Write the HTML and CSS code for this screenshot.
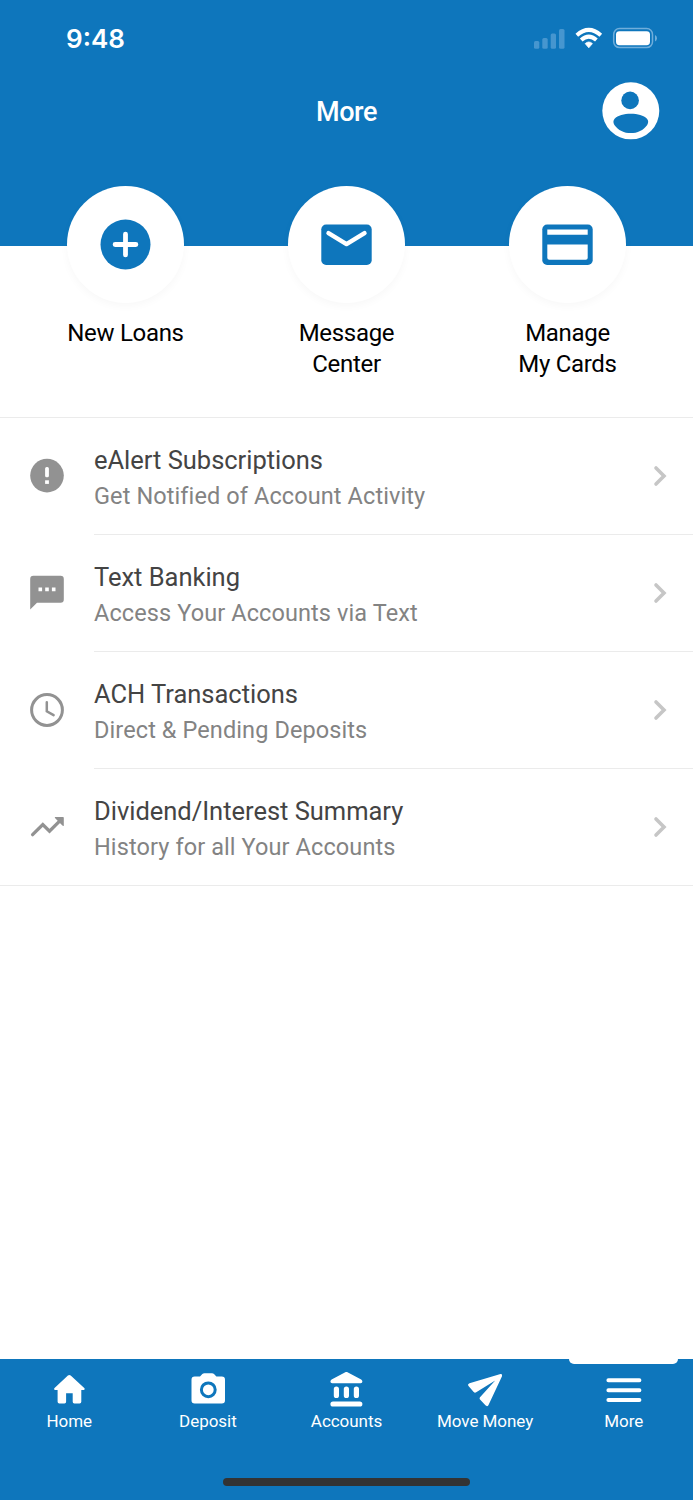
FILE: index.html
```
<!DOCTYPE html>
<html lang="en">
<head>
    <meta charset="UTF-8">
    <meta name="viewport" content="width=device-width, initial-scale=1.0">
    <title>More</title>
    <link rel="stylesheet" href="styles.css">
</head>
<body>
    <header class="header">
        <div class="status-bar">
            <span class="time">9:48</span>
            <svg class="status-icons" width="124" height="22" viewBox="0 0 124 22">
                <g fill="#4696cf">
                    <rect x="1" y="14" width="5.3" height="7.7" rx="1.5"/>
                    <rect x="9.3" y="11" width="5.4" height="10.7" rx="1.5"/>
                    <rect x="17.7" y="6.5" width="5.3" height="15.2" rx="1.5"/>
                    <rect x="26" y="2" width="5.5" height="19.7" rx="1.5"/>
                </g>
                <g fill="none" stroke="#fff" stroke-width="4">
                    <path d="M43.8 8.2Q55.8 -2.4 67.8 8.2"/>
                    <path d="M48.2 13Q55.8 6.2 63.4 13"/>
                </g>
                <path d="M52.2 16.6Q55.8 13.4 59.4 16.6L55.8 20.8Z" fill="#fff" stroke="#fff" stroke-width="0.8" stroke-linejoin="round"/>
                <rect x="80.7" y="1.6" width="38.8" height="19" rx="5.8" fill="none" stroke="#70aedb" stroke-width="1.5"/>
                <rect x="83" y="4.2" width="34" height="14" rx="3.4" fill="#fff"/>
                <path d="M122 8Q124 8.9 124 11.2Q124 13.5 122 14.5Z" fill="#70aedb"/>
            </svg>
        </div>
        <div class="title-bar">
            <h1 class="title">More</h1>
            <svg class="avatar" width="58" height="58" viewBox="0 0 58 58">
                <circle cx="28.8" cy="28.8" r="28.5" fill="#fff"/>
                <circle cx="28.1" cy="18.4" r="8.8" fill="#0e76bc"/>
                <path d="M12.6 36.8C15.8 33.4 22 31.8 28.8 31.8C35.6 31.8 41.8 33.4 45 36.8C46.6 38.6 46.5 41 45.2 42.9C41.6 48.2 35.2 51.1 28.8 51.1C22.4 51.1 16 48.2 12.4 42.9C11.1 41 11 38.6 12.6 36.8Z" fill="#0e76bc"/>
            </svg>
        </div>
    </header>

    <section class="shortcuts">
        <a class="shortcut">
            <span class="circle">
                <svg width="53" height="53" viewBox="-0.5 -0.5 53 53">
                    <circle cx="26" cy="26" r="25" fill="#0e76bc"/>
                    <path d="M26 15.6V36.4M15.6 26H36.4" stroke="#fff" stroke-width="4.8" stroke-linecap="round"/>
                </svg>
            </span>
            <span class="shortcut-label">New Loans</span>
        </a>
        <a class="shortcut">
            <span class="circle">
                <svg width="53" height="53" viewBox="-0.5 -0.5 53 53">
                    <rect x="0.8" y="6" width="50.4" height="40.5" rx="4.8" fill="#0e76bc"/>
                    <path d="M8 14.6L26 25.6L44 14.6" fill="none" stroke="#fff" stroke-width="4.4" stroke-linecap="round" stroke-linejoin="round"/>
                </svg>
            </span>
            <span class="shortcut-label">Message Center</span>
        </a>
        <a class="shortcut">
            <span class="circle">
                <svg width="53" height="53" viewBox="-0.5 -0.5 53 53">
                    <rect x="0.8" y="6" width="50.4" height="40.5" rx="4.8" fill="#0e76bc"/>
                    <path d="M5.8 11H46.2V16.2H5.8Z" fill="#fff"/>
                    <path d="M5.8 26H46.2V39.2Q46.2 41.2 44.2 41.2H7.8Q5.8 41.2 5.8 39.2Z" fill="#fff"/>
                </svg>
            </span>
            <span class="shortcut-label">Manage<br>My Cards</span>
        </a>
    </section>

    <main class="list">
        <a class="row">
            <svg class="row-icon" width="36" height="36" viewBox="0 0 36 36">
                <circle cx="18" cy="17.6" r="16.8" fill="#929292"/>
                <rect x="16.1" y="9.1" width="3.8" height="10.2" rx="1.5" fill="#fff"/>
                <rect x="16.1" y="22.3" width="3.8" height="3.6" fill="#fff"/>
            </svg>
            <div class="row-body">
                <div class="row-text">
                    <div class="row-title">eAlert Subscriptions</div>
                    <div class="row-sub">Get Notified of Account Activity</div>
                </div>
                <svg class="chevron" width="14" height="22" viewBox="0 0 14 22"><path d="M3 3L11 11L3 19"/></svg>
            </div>
        </a>
        <a class="row">
            <svg class="row-icon" width="36" height="36" viewBox="0 0.4 36 36">
                <path d="M4.4 1.2H31.6Q34.8 1.2 34.8 4.4V25Q34.8 28.2 31.6 28.2H8L1.2 34.8V4.4Q1.2 1.2 4.4 1.2Z" fill="#929292"/>
                <path d="M9.5 13h3.6v3.6h-3.6zM16.2 13h3.6v3.6h-3.6zM22.9 13h3.6v3.6h-3.6z" fill="#fff"/>
            </svg>
            <div class="row-body">
                <div class="row-text">
                    <div class="row-title">Text Banking</div>
                    <div class="row-sub">Access Your Accounts via Text</div>
                </div>
                <svg class="chevron" width="14" height="22" viewBox="0 0 14 22"><path d="M3 3L11 11L3 19"/></svg>
            </div>
        </a>
        <a class="row">
            <svg class="row-icon" width="36" height="36" viewBox="0 0 36 36">
                <circle cx="18" cy="18" r="15.4" fill="none" stroke="#929292" stroke-width="3"/>
                <path d="M17.8 10.3V19.3L24.6 23.2" fill="none" stroke="#929292" stroke-width="2.5" stroke-linecap="round"/>
            </svg>
            <div class="row-body">
                <div class="row-text">
                    <div class="row-title">ACH Transactions</div>
                    <div class="row-sub">Direct &amp; Pending Deposits</div>
                </div>
                <svg class="chevron" width="14" height="22" viewBox="0 0 14 22"><path d="M3 3L11 11L3 19"/></svg>
            </div>
        </a>
        <a class="row">
            <svg class="row-icon" width="36" height="36" viewBox="0 -0.7 36 36">
                <path d="M3.6 26L13.8 15.8L20.5 22.5L30.6 12.4" fill="none" stroke="#929292" stroke-width="3.3" stroke-linecap="round"/>
                <path d="M26 8.2H34Q34.8 8.2 34.8 9V17Q34.2 17.6 33.4 16.8L26.2 9.6Q25.4 8.7 26 8.2Z" fill="#929292"/>
            </svg>
            <div class="row-body">
                <div class="row-text">
                    <div class="row-title">Dividend/Interest Summary</div>
                    <div class="row-sub">History for all Your Accounts</div>
                </div>
                <svg class="chevron" width="14" height="22" viewBox="0 0 14 22"><path d="M3 3L11 11L3 19"/></svg>
            </div>
        </a>
    </main>

    <nav class="tabs">
        <a class="tab">
            <svg width="36" height="36" viewBox="-0.3 0 36 36">
                <path d="M16.6 3.5Q18 2.5 19.4 3.5L33.2 16.3Q34 17.7 32.6 17.9H30V29.8Q30 31.5 28.3 31.5H23Q21.4 31.5 21.4 29.8V21.3H14.8V29.8Q14.8 31.5 13.2 31.5H8Q6.3 31.5 6.3 29.8V17.9H3.6Q2.2 17.7 3 16.3Z" fill="#fff"/>
            </svg>
            <span>Home</span>
        </a>
        <a class="tab">
            <svg width="36" height="36" viewBox="0 0 36 36">
                <path d="M4.7 4.5H10L12.3 2Q13.2 1.2 14.4 1.2H22Q23.2 1.2 24 2L26.4 4.5H31.8Q35 4.5 35 7.7V28.3Q35 31.5 31.8 31.5H4.7Q1.5 31.5 1.5 28.3V7.7Q1.5 4.5 4.7 4.5Z" fill="#fff"/>
                <circle cx="18.3" cy="17.8" r="6.9" fill="#fff" stroke="#0e76bc" stroke-width="3"/>
            </svg>
            <span>Deposit</span>
        </a>
        <a class="tab">
            <svg width="36" height="36" viewBox="-0.4 0 36 36">
                <path d="M16.9 0.2Q18 -0.4 19.1 0.2L32.8 7.4Q34 8.2 34 9.4Q34 11.2 32.2 11.2H3.8Q2 11.2 2 9.4Q2 8.2 3.2 7.4Z" fill="#fff"/>
                <path d="M8 17V23.5M18 17V23.5M28 17V23.5M4.6 32H31.4" stroke="#fff" stroke-width="5.2" stroke-linecap="round"/>
            </svg>
            <span>Accounts</span>
        </a>
        <a class="tab">
            <svg width="36" height="36" viewBox="0 0 36 36">
                <path d="M33.5 2Q35.7 1.8 35 4.3L21.4 33.2Q20.2 35 18.4 33.3L12.8 27.3Q12.2 26.3 13 25.3L28.2 8.4L9.2 20.3Q7.8 21.2 6.7 20L1.3 13.8Q0.3 12 2.5 11.2Z" fill="#fff"/>
            </svg>
            <span>Move Money</span>
        </a>
        <a class="tab active">
            <svg width="36" height="36" viewBox="0 0 36 36">
                <path d="M2.4 8.3H33.4M2.4 18.2H33.4M2.4 28H33.4" stroke="#fff" stroke-width="4" stroke-linecap="round"/>
            </svg>
            <span>More</span>
        </a>
        <div class="home-indicator"></div>
    </nav>
</body>
</html>
```
FILE: styles.css
```
* {
    box-sizing: border-box;
}
body {
    margin: 0;
    height: 1500px;
    display: flex;
    flex-direction: column;
    font-family: Roboto, Arial, sans-serif;
    background-color: #fff;
    color: #000;
}
svg {
    display: block;
    flex: none;
}
.header {
    height: 246px;
    background-color: #0e76bc;
    color: #fff;
}
.status-bar {
    height: 76px;
    padding: 0 36px 0 66px;
    display: flex;
    justify-content: space-between;
    align-items: center;
}
.time {
    font-family: Inter, sans-serif;
    font-size: 26px;
    font-weight: 600;
}
.title-bar {
    height: 70px;
    padding: 0 33px;
    display: grid;
    grid-template-columns: 58px 1fr 58px;
    align-items: center;
}
.title {
    grid-column: 2;
    margin: 0;
    padding-top: 2px;
    text-align: center;
    font-size: 27px;
    font-weight: 500;
    letter-spacing: -0.4px;
}
.shortcuts {
    height: 232px;
    margin-top: -60px;
    padding: 0 15px;
    display: grid;
    grid-template-columns: repeat(3, 1fr);
    border-bottom: 1px solid #ebebeb;
}
.shortcut {
    display: flex;
    flex-direction: column;
    align-items: center;
}
.circle {
    width: 117px;
    height: 117px;
    display: flex;
    justify-content: center;
    align-items: center;
    border-radius: 50%;
    background-color: #fff;
    box-shadow: 0 3px 8px rgba(0, 0, 0, 0.03);
}
.shortcut-label {
    width: 120px;
    margin-top: 15px;
    text-align: center;
    font-size: 24px;
    line-height: 31px;
    letter-spacing: -0.3px;
}
.row {
    height: 117px;
    padding-left: 29px;
    display: flex;
    align-items: center;
}
.row-icon {
    margin-bottom: 2px;
}
.row-body {
    flex: 1;
    height: 117px;
    margin-left: 29px;
    padding-right: 26px;
    display: flex;
    justify-content: space-between;
    align-items: center;
    border-bottom: 1px solid #ebebeb;
}
.row:last-child {
    border-bottom: 1px solid #ebebeb;
}
.row:last-child .row-body {
    border-bottom: none;
}
.row-text {
    padding-top: 3px;
}
.row-title {
    font-size: 25.5px;
    line-height: 36px;
    letter-spacing: -0.02px;
    color: #444;
}
.row-sub {
    font-size: 23.5px;
    line-height: 36px;
    letter-spacing: 0.1px;
    color: #838383;
}
.chevron {
    margin-bottom: 1px;
}
.chevron path {
    fill: none;
    stroke: #c6c6c6;
    stroke-width: 3.6;
    stroke-linecap: round;
}
.tabs {
    position: relative;
    height: 141px;
    margin-top: auto;
    padding-top: 13px;
    display: grid;
    grid-template-columns: repeat(5, 1fr);
    background-color: #0e76bc;
    color: #fff;
}
.tab {
    position: relative;
    display: flex;
    flex-direction: column;
    align-items: center;
    font-size: 17px;
    line-height: 20px;
    letter-spacing: -0.05px;
}
.tab span {
    margin-top: 3px;
}
.tab.active::before {
    content: "";
    position: absolute;
    top: -13px;
    left: 15px;
    right: 15px;
    height: 5px;
    border-radius: 0 0 5px 5px;
    background-color: #fff;
}
.home-indicator {
    position: absolute;
    left: 223px;
    bottom: 14px;
    width: 247px;
    height: 8px;
    border-radius: 4px;
    background-color: #333;
}
```
